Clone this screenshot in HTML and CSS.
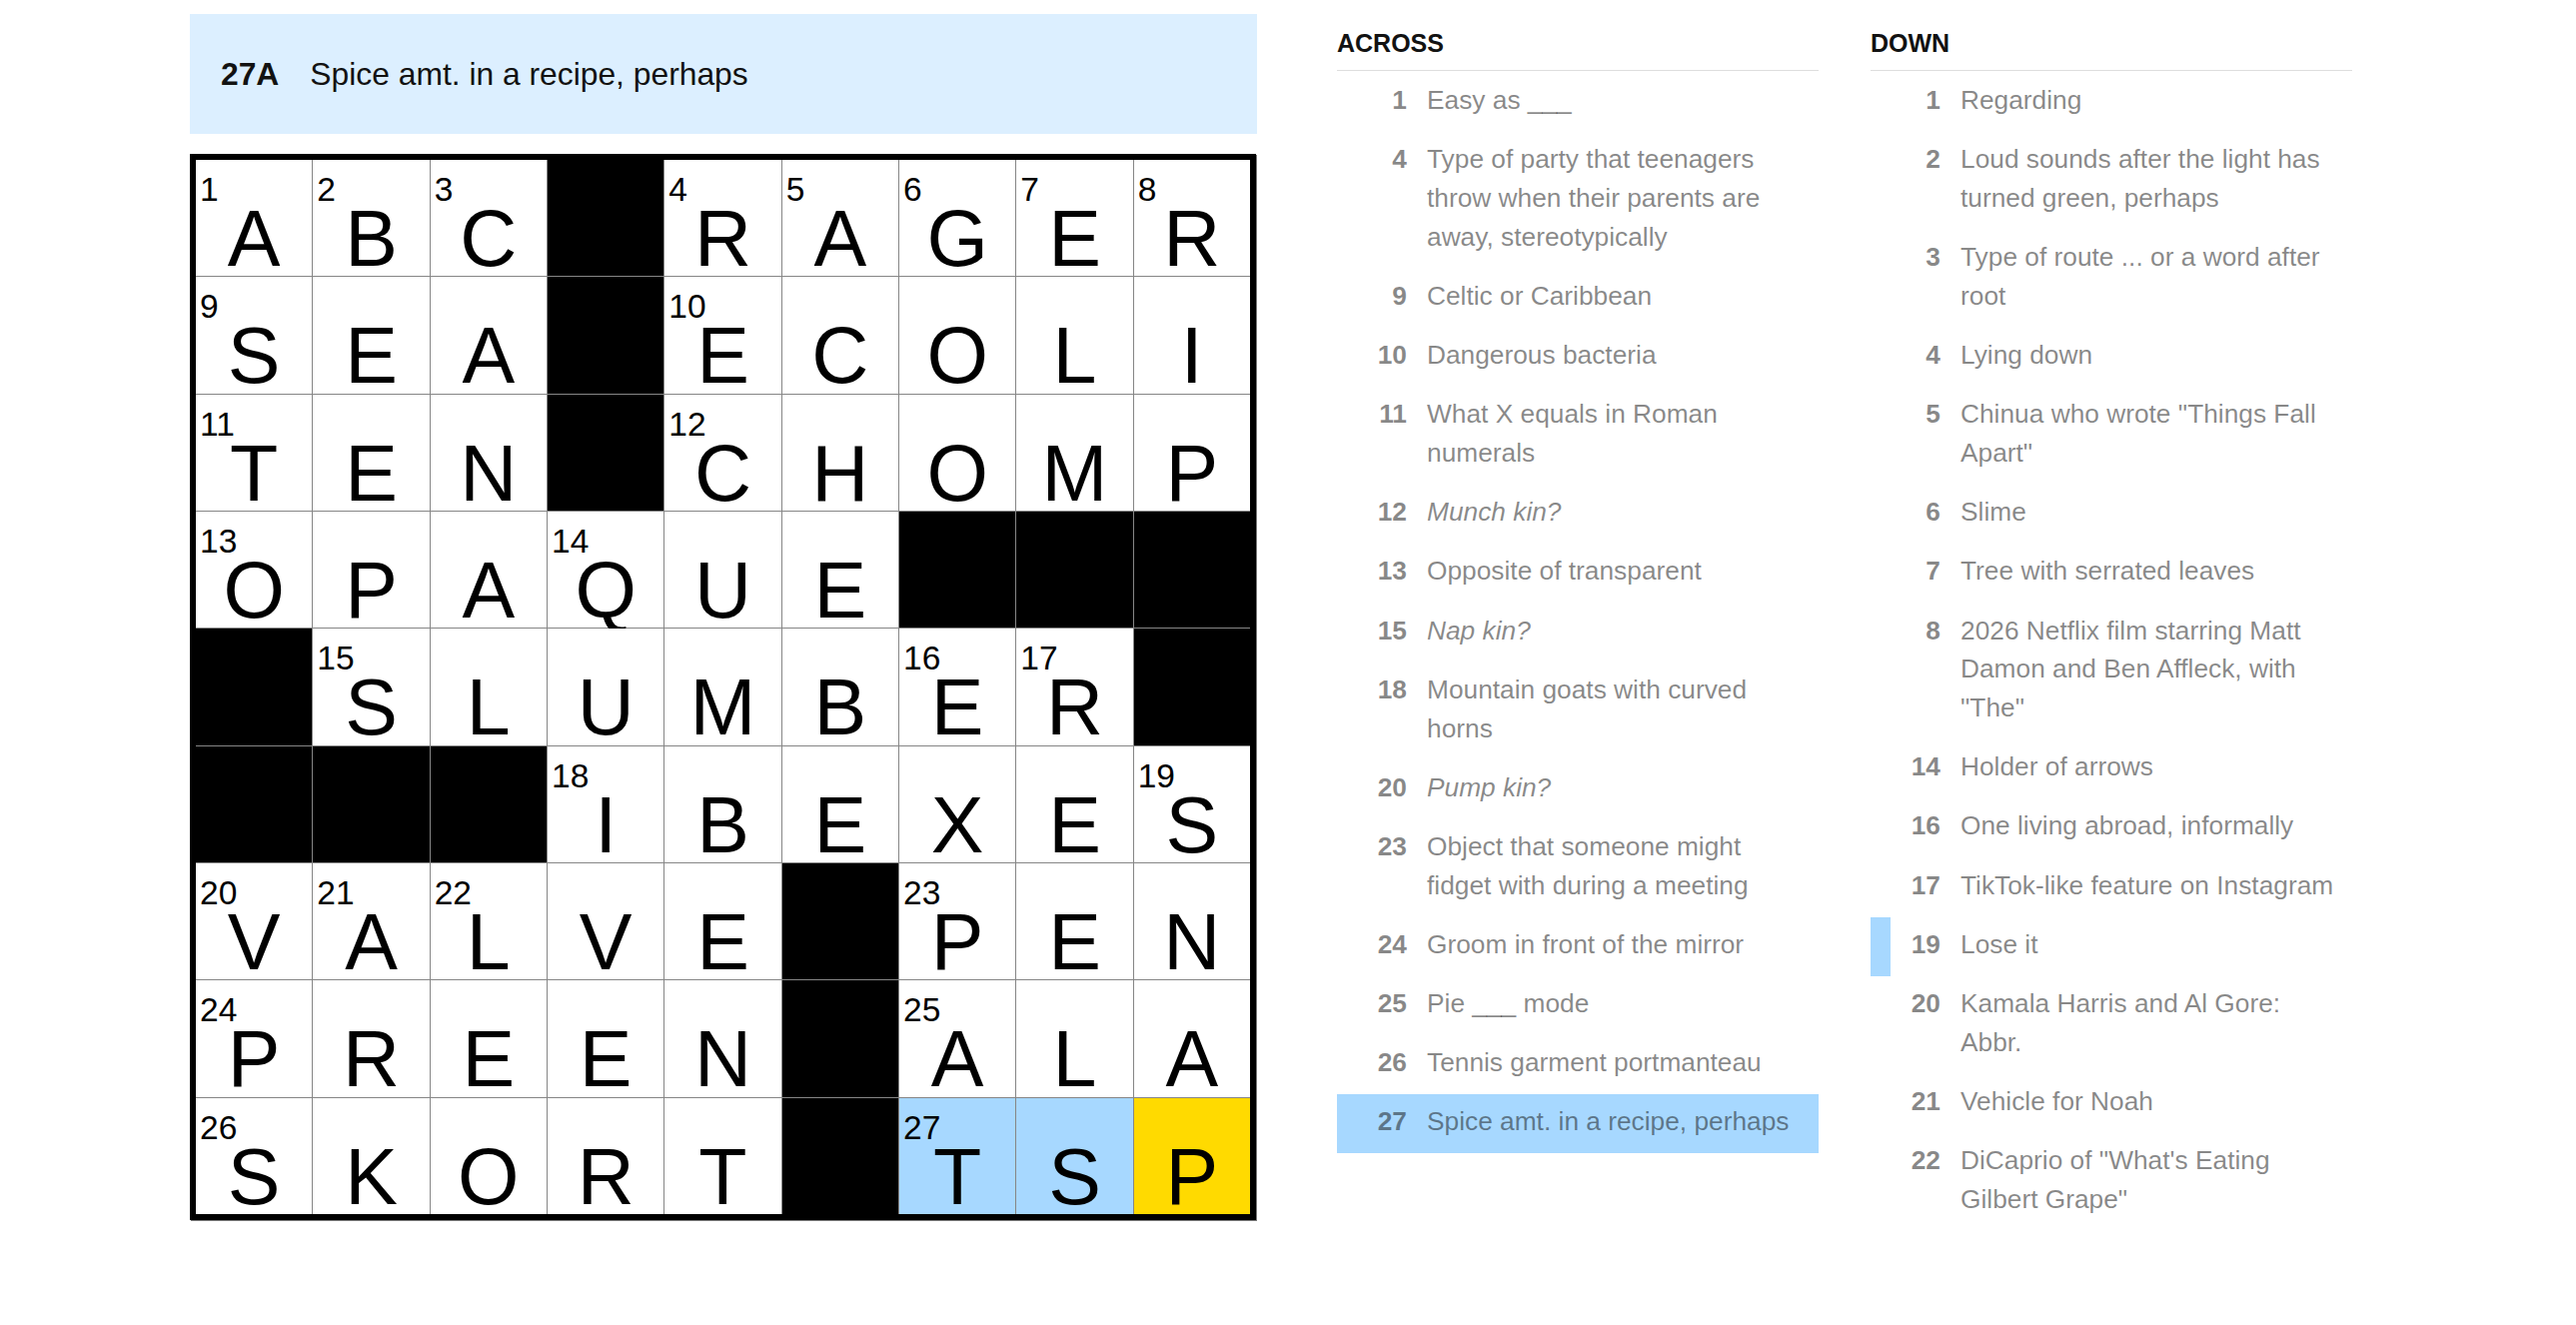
FILE: index.html
```html
<!DOCTYPE html>
<html lang="en">
<head>
<meta charset="utf-8">
<title>Mini Crossword</title>
<link rel="stylesheet" href="styles.css">
</head>
<body>
<div class="page">
  <section class="board">
    <div class="banner"><span class="banner-num">27A</span><span class="banner-text">Spice amt. in a recipe, perhaps</span></div>
    <div class="grid">
      <div class="cell"><span class="num">1</span><span class="ltr">A</span></div>
      <div class="cell"><span class="num">2</span><span class="ltr">B</span></div>
      <div class="cell"><span class="num">3</span><span class="ltr">C</span></div>
      <div class="cell blk"></div>
      <div class="cell"><span class="num">4</span><span class="ltr">R</span></div>
      <div class="cell"><span class="num">5</span><span class="ltr">A</span></div>
      <div class="cell"><span class="num">6</span><span class="ltr">G</span></div>
      <div class="cell"><span class="num">7</span><span class="ltr">E</span></div>
      <div class="cell"><span class="num">8</span><span class="ltr">R</span></div>

      <div class="cell"><span class="num">9</span><span class="ltr">S</span></div>
      <div class="cell"><span class="ltr">E</span></div>
      <div class="cell"><span class="ltr">A</span></div>
      <div class="cell blk"></div>
      <div class="cell"><span class="num">10</span><span class="ltr">E</span></div>
      <div class="cell"><span class="ltr">C</span></div>
      <div class="cell"><span class="ltr">O</span></div>
      <div class="cell"><span class="ltr">L</span></div>
      <div class="cell"><span class="ltr">I</span></div>

      <div class="cell"><span class="num">11</span><span class="ltr">T</span></div>
      <div class="cell"><span class="ltr">E</span></div>
      <div class="cell"><span class="ltr">N</span></div>
      <div class="cell blk"></div>
      <div class="cell"><span class="num">12</span><span class="ltr">C</span></div>
      <div class="cell"><span class="ltr">H</span></div>
      <div class="cell"><span class="ltr">O</span></div>
      <div class="cell"><span class="ltr">M</span></div>
      <div class="cell"><span class="ltr">P</span></div>

      <div class="cell"><span class="num">13</span><span class="ltr">O</span></div>
      <div class="cell"><span class="ltr">P</span></div>
      <div class="cell"><span class="ltr">A</span></div>
      <div class="cell"><span class="num">14</span><span class="ltr">Q</span></div>
      <div class="cell"><span class="ltr">U</span></div>
      <div class="cell"><span class="ltr">E</span></div>
      <div class="cell blk"></div>
      <div class="cell blk"></div>
      <div class="cell blk"></div>

      <div class="cell blk"></div>
      <div class="cell"><span class="num">15</span><span class="ltr">S</span></div>
      <div class="cell"><span class="ltr">L</span></div>
      <div class="cell"><span class="ltr">U</span></div>
      <div class="cell"><span class="ltr">M</span></div>
      <div class="cell"><span class="ltr">B</span></div>
      <div class="cell"><span class="num">16</span><span class="ltr">E</span></div>
      <div class="cell"><span class="num">17</span><span class="ltr">R</span></div>
      <div class="cell blk"></div>

      <div class="cell blk"></div>
      <div class="cell blk"></div>
      <div class="cell blk"></div>
      <div class="cell"><span class="num">18</span><span class="ltr">I</span></div>
      <div class="cell"><span class="ltr">B</span></div>
      <div class="cell"><span class="ltr">E</span></div>
      <div class="cell"><span class="ltr">X</span></div>
      <div class="cell"><span class="ltr">E</span></div>
      <div class="cell"><span class="num">19</span><span class="ltr">S</span></div>

      <div class="cell"><span class="num">20</span><span class="ltr">V</span></div>
      <div class="cell"><span class="num">21</span><span class="ltr">A</span></div>
      <div class="cell"><span class="num">22</span><span class="ltr">L</span></div>
      <div class="cell"><span class="ltr">V</span></div>
      <div class="cell"><span class="ltr">E</span></div>
      <div class="cell blk"></div>
      <div class="cell"><span class="num">23</span><span class="ltr">P</span></div>
      <div class="cell"><span class="ltr">E</span></div>
      <div class="cell"><span class="ltr">N</span></div>

      <div class="cell"><span class="num">24</span><span class="ltr">P</span></div>
      <div class="cell"><span class="ltr">R</span></div>
      <div class="cell"><span class="ltr">E</span></div>
      <div class="cell"><span class="ltr">E</span></div>
      <div class="cell"><span class="ltr">N</span></div>
      <div class="cell blk"></div>
      <div class="cell"><span class="num">25</span><span class="ltr">A</span></div>
      <div class="cell"><span class="ltr">L</span></div>
      <div class="cell"><span class="ltr">A</span></div>

      <div class="cell"><span class="num">26</span><span class="ltr">S</span></div>
      <div class="cell"><span class="ltr">K</span></div>
      <div class="cell"><span class="ltr">O</span></div>
      <div class="cell"><span class="ltr">R</span></div>
      <div class="cell"><span class="ltr">T</span></div>
      <div class="cell blk"></div>
      <div class="cell word"><span class="num">27</span><span class="ltr">T</span></div>
      <div class="cell word"><span class="ltr">S</span></div>
      <div class="cell sel"><span class="ltr">P</span></div>
    </div>
  </section>

  <section class="clues">
    <div class="col">
      <h3 class="col-title">Across</h3>
      <ol class="list">
        <li class="clue"><span class="clue-num">1</span><span class="clue-text">Easy as ___</span></li>
        <li class="clue"><span class="clue-num">4</span><span class="clue-text">Type of party that teenagers throw when their parents are away, stereotypically</span></li>
        <li class="clue"><span class="clue-num">9</span><span class="clue-text">Celtic or Caribbean</span></li>
        <li class="clue"><span class="clue-num">10</span><span class="clue-text">Dangerous bacteria</span></li>
        <li class="clue"><span class="clue-num">11</span><span class="clue-text">What X equals in Roman numerals</span></li>
        <li class="clue"><span class="clue-num">12</span><span class="clue-text it">Munch kin?</span></li>
        <li class="clue"><span class="clue-num">13</span><span class="clue-text">Opposite of transparent</span></li>
        <li class="clue"><span class="clue-num">15</span><span class="clue-text it">Nap kin?</span></li>
        <li class="clue"><span class="clue-num">18</span><span class="clue-text">Mountain goats with curved horns</span></li>
        <li class="clue"><span class="clue-num">20</span><span class="clue-text it">Pump kin?</span></li>
        <li class="clue"><span class="clue-num">23</span><span class="clue-text">Object that someone might fidget with during a meeting</span></li>
        <li class="clue"><span class="clue-num">24</span><span class="clue-text">Groom in front of the mirror</span></li>
        <li class="clue"><span class="clue-num">25</span><span class="clue-text">Pie ___ mode</span></li>
        <li class="clue"><span class="clue-num">26</span><span class="clue-text">Tennis garment portmanteau</span></li>
        <li class="clue on"><span class="clue-num">27</span><span class="clue-text">Spice amt. in a recipe, perhaps</span></li>
      </ol>
    </div>
    <div class="col">
      <h3 class="col-title">Down</h3>
      <ol class="list">
        <li class="clue"><span class="clue-num">1</span><span class="clue-text">Regarding</span></li>
        <li class="clue"><span class="clue-num">2</span><span class="clue-text">Loud sounds after the light has turned green, perhaps</span></li>
        <li class="clue"><span class="clue-num">3</span><span class="clue-text">Type of route ... or a word after root</span></li>
        <li class="clue"><span class="clue-num">4</span><span class="clue-text">Lying down</span></li>
        <li class="clue"><span class="clue-num">5</span><span class="clue-text">Chinua who wrote "Things Fall Apart"</span></li>
        <li class="clue"><span class="clue-num">6</span><span class="clue-text">Slime</span></li>
        <li class="clue"><span class="clue-num">7</span><span class="clue-text">Tree with serrated leaves</span></li>
        <li class="clue"><span class="clue-num">8</span><span class="clue-text">2026 Netflix film starring Matt Damon and Ben Affleck, with "The"</span></li>
        <li class="clue"><span class="clue-num">14</span><span class="clue-text">Holder of arrows</span></li>
        <li class="clue"><span class="clue-num">16</span><span class="clue-text">One living abroad, informally</span></li>
        <li class="clue"><span class="clue-num">17</span><span class="clue-text">TikTok-like feature on Instagram</span></li>
        <li class="clue cross"><span class="clue-num">19</span><span class="clue-text">Lose it</span></li>
        <li class="clue"><span class="clue-num">20</span><span class="clue-text">Kamala Harris and Al Gore: Abbr.</span></li>
        <li class="clue"><span class="clue-num">21</span><span class="clue-text">Vehicle for Noah</span></li>
        <li class="clue"><span class="clue-num">22</span><span class="clue-text">DiCaprio of "What's Eating Gilbert Grape"</span></li>
      </ol>
    </div>
  </section>
</div>
</body>
</html>
```
FILE: styles.css
```css
* { box-sizing: border-box; }

body {
  margin: 0;
  background: #fff;
  color: #121212;
  font-family: "Liberation Sans", Arial, sans-serif;
}

.page {
  display: flex;
  align-items: flex-start;
  padding: 14px 0 0 190px;
}

/* ---------- board ---------- */
.board {
  flex: none;
  width: 1068px;
}

.banner {
  height: 120px;
  background: #dcefff;
  display: flex;
  align-items: center;
  padding-left: 31px;
  font-size: 31.8px;
  color: #121212;
}

.banner-num {
  font-weight: 700;
  margin-right: 31px;
}

.grid {
  margin-top: 20px;
  width: 1067px;
  height: 1067px;
  border: 6px solid #000;
  background: #868686;
  display: grid;
  grid-template-columns: repeat(9, minmax(0, 1fr));
  grid-template-rows: repeat(9, minmax(0, 1fr));
  gap: 1px;
  box-shadow: 1px 1px 0 #7a7a7a;
}

.cell {
  position: relative;
  background: #fff;
}

.cell.blk { background: #000; }
.cell.word { background: #a7d8ff; }
.cell.sel { background: #ffda00; }

.num {
  position: absolute;
  top: 13px;
  left: 4px;
  font-size: 33.5px;
  line-height: 1;
  color: #000;
}

.ltr {
  display: block;
  text-align: center;
  font-size: 79px;
  line-height: 70px;
  padding-top: 44px;
  color: #000;
}

/* ---------- clue lists ---------- */
.clues {
  flex: none;
  display: flex;
  gap: 52px;
  margin-left: 80px;
}

.col {
  width: 482px;
}

.col-title {
  margin: 14px 0 0;
  font-size: 25px;
  font-weight: 700;
  line-height: 30px;
  padding-bottom: 12px;
  border-bottom: 1px solid #dedede;
  text-transform: uppercase;
  color: #121212;
}

.list {
  list-style: none;
  margin: 2px 0 0;
  padding: 0;
}

.clue {
  display: flex;
  padding: 8.2px 0 12.3px;
  font-size: 26.3px;
  line-height: 38.7px;
  color: rgba(18, 18, 18, 0.5);
}

.clue-num {
  flex: 0 0 70px;
  text-align: right;
  font-weight: 700;
}

.clue-text {
  flex: 1;
  margin-left: 20px;
  padding-right: 11px;
}

.clue-text.it { font-style: italic; }

.clue.on { background: #a7d8ff; }

.clue.cross { box-shadow: inset 20px 0 0 #a7d8ff; }
```
